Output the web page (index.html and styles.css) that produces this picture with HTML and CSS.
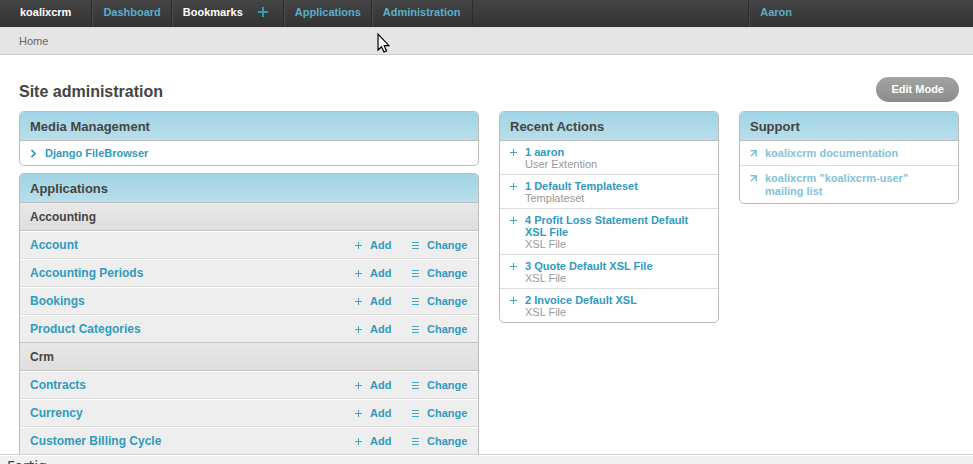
FILE: index.html
```html
<!DOCTYPE html>
<html lang="en">
<head>
<meta charset="utf-8">
<title>Site administration</title>
<link rel="stylesheet" href="styles.css">
</head>
<body>
<svg class="defs" aria-hidden="true">
  <symbol id="plus" viewBox="0 0 7 7"><path d="M3 0h1v7h-1zM0 3h7v1h-7z" fill="currentColor"/></symbol>
  <symbol id="list" viewBox="0 0 7 7"><path d="M0 0h7v1h-7zM0 3h7v1h-7zM0 6h7v1h-7z" fill="currentColor"/></symbol>
  <symbol id="chevron" viewBox="0 0 7 9"><path d="M1.5 .8L5 4.5L1.5 8.2" fill="none" stroke="currentColor" stroke-width="1.7"/></symbol>
  <symbol id="external" viewBox="0 0 7 7"><path d="M.4 .8h5.8v5.8M6 1L.8 6.2" fill="none" stroke="currentColor" stroke-width="1.6"/></symbol>
</svg>
<header class="topbar">
  <nav class="nav">
    <span class="nav-item brand">koalixcrm</span>
    <a class="nav-item" href="#">Dashboard</a>
    <span class="nav-item bookmarks">Bookmarks <button class="add-bookmark" type="button" aria-label="Add bookmark"><svg viewBox="0 0 10 10"><path d="M5 0v10M0 5h10" fill="none" stroke="currentColor" stroke-width="2"/></svg></button></span>
    <a class="nav-item" href="#">Applications</a>
    <a class="nav-item" href="#">Administration</a>
  </nav>
  <a class="nav-item user" href="#">Aaron</a>
</header>
<div class="breadcrumbs">Home</div>
<main class="content">
  <div class="title-row">
    <h1>Site administration</h1>
    <button class="edit-mode" type="button">Edit Mode</button>
  </div>
  <div class="columns">
    <div class="column">
      <section class="module">
        <h2>Media Management</h2>
        <ul class="links">
          <li><svg class="icon chevron"><use href="#chevron"/></svg><a href="#">Django FileBrowser</a></li>
        </ul>
      </section>
      <section class="module continues">
        <h2>Applications</h2>
        <h3>Accounting</h3>
        <ul class="models">
          <li><a class="model" href="#">Account</a><a class="action add" href="#"><svg class="icon"><use href="#plus"/></svg>Add</a><a class="action change" href="#"><svg class="icon"><use href="#list"/></svg>Change</a></li>
          <li><a class="model" href="#">Accounting Periods</a><a class="action add" href="#"><svg class="icon"><use href="#plus"/></svg>Add</a><a class="action change" href="#"><svg class="icon"><use href="#list"/></svg>Change</a></li>
          <li><a class="model" href="#">Bookings</a><a class="action add" href="#"><svg class="icon"><use href="#plus"/></svg>Add</a><a class="action change" href="#"><svg class="icon"><use href="#list"/></svg>Change</a></li>
          <li><a class="model" href="#">Product Categories</a><a class="action add" href="#"><svg class="icon"><use href="#plus"/></svg>Add</a><a class="action change" href="#"><svg class="icon"><use href="#list"/></svg>Change</a></li>
        </ul>
        <h3>Crm</h3>
        <ul class="models">
          <li><a class="model" href="#">Contracts</a><a class="action add" href="#"><svg class="icon"><use href="#plus"/></svg>Add</a><a class="action change" href="#"><svg class="icon"><use href="#list"/></svg>Change</a></li>
          <li><a class="model" href="#">Currency</a><a class="action add" href="#"><svg class="icon"><use href="#plus"/></svg>Add</a><a class="action change" href="#"><svg class="icon"><use href="#list"/></svg>Change</a></li>
          <li><a class="model" href="#">Customer Billing Cycle</a><a class="action add" href="#"><svg class="icon"><use href="#plus"/></svg>Add</a><a class="action change" href="#"><svg class="icon"><use href="#list"/></svg>Change</a></li>
        </ul>
      </section>
    </div>
    <div class="column">
      <section class="module">
        <h2>Recent Actions</h2>
        <ul class="recent">
          <li><svg class="icon"><use href="#plus"/></svg><div><a href="#">1 aaron</a><span>User Extention</span></div></li>
          <li><svg class="icon"><use href="#plus"/></svg><div><a href="#">1 Default Templateset</a><span>Templateset</span></div></li>
          <li><svg class="icon"><use href="#plus"/></svg><div><a href="#">4 Profit Loss Statement Default XSL File</a><span>XSL File</span></div></li>
          <li><svg class="icon"><use href="#plus"/></svg><div><a href="#">3 Quote Default XSL File</a><span>XSL File</span></div></li>
          <li><svg class="icon"><use href="#plus"/></svg><div><a href="#">2 Invoice Default XSL</a><span>XSL File</span></div></li>
        </ul>
      </section>
    </div>
    <div class="column">
      <section class="module">
        <h2>Support</h2>
        <ul class="links external">
          <li><svg class="icon"><use href="#external"/></svg><a href="#">koalixcrm documentation</a></li>
          <li><svg class="icon"><use href="#external"/></svg><a href="#">koalixcrm "koalixcrm-user" mailing list</a></li>
        </ul>
      </section>
    </div>
  </div>
</main>
<footer class="statusbar">Fertig</footer>
<svg class="cursor" viewBox="0 0 13 20" aria-hidden="true"><path d="M1 1v16l3.5-3.3L7 19l2.6-1.1-2.4-5.2H12z" fill="#fff" stroke="#000" stroke-width="1.2"/></svg>
</body>
</html>
```

FILE: styles.css
```css
* { box-sizing: border-box; }

body {
  margin: 0;
  height: 100vh;
  display: flex;
  flex-direction: column;
  overflow: hidden;
  background: #fff;
  color: #444;
  font: 11px/13px "Liberation Sans", Arial, sans-serif;
}

h1, h2, h3, ul { margin: 0; padding: 0; }
ul { list-style: none; }
a { color: #309bbf; font-weight: bold; text-decoration: none; }
.defs { display: none; }
.icon { width: 7px; height: 7px; flex: none; color: #45a5c4; }

.topbar {
  display: flex;
  flex: none;
  justify-content: space-between;
  height: 27px;
  background: linear-gradient(#444, #333);
  font-weight: bold;
}
.nav { display: flex; }
.nav-item {
  display: flex;
  align-items: flex-start;
  padding: 6px 11px 0 10px;
  border-left: 1px solid #484848;
  box-shadow: -1px 0 #2b2b2b;
  color: #59afcc;
}
.nav-item.brand { padding: 6px 21px 0 20px; border-left: 0; color: #fff; }
.nav-item.bookmarks { gap: 15px; padding-right: 16px; color: #fff; }
.nav > :last-child { padding-right: 12px; border-right: 1px solid #2b2b2b; }
.nav-item.user { flex: 0 0 23%; }
.add-bookmark {
  display: flex;
  align-items: flex-start;
  height: 13px;
  padding: 1px 0 0;
  border: 0;
  background: none;
  color: #309bbf;
}
.add-bookmark svg { width: 10px; height: 10px; }

.breadcrumbs {
  flex: none;
  padding: 7px 19px 6px;
  border-top: 1px solid #d9d9d9;
  border-bottom: 1px solid #ccc;
  background: #e5e5e5;
  color: #666;
}

.content { flex: 1; min-height: 0; overflow: hidden; padding: 22px 14px 0 19px; }
.title-row { display: flex; justify-content: space-between; align-items: flex-start; margin-bottom: 9px; }
h1 { padding-top: 5px; font-size: 16px; line-height: 20px; }
.edit-mode {
  height: 25px;
  padding: 0 15px;
  border: 0;
  border-radius: 13px;
  background: linear-gradient(#a3a3a3, #8c8c8c);
  color: #fff;
  font: bold 11px/13px "Liberation Sans", Arial, sans-serif;
}

.columns { display: grid; grid-template-columns: 460fr 220fr 220fr; gap: 20px; align-items: start; }
.column { display: grid; gap: 7px; }
.module { overflow: hidden; border: 1px solid #bdbdbd; border-radius: 5px; background: #fff; }
.module.continues { border-bottom: 0; border-radius: 5px 5px 0 0; }
h2 {
  padding: 7px 10px 5px;
  border-bottom: 1px solid #bdbdbd;
  background: linear-gradient(#a1d4e5, #b9deeb);
  font-size: 13px;
  line-height: 16px;
}
h3 {
  padding: 7px 10px 5px;
  border-bottom: 1px solid #c4c4c4;
  background: linear-gradient(#e8e8e8, #dedede);
  font-size: 12px;
  line-height: 15px;
}

.links li { display: flex; align-items: flex-start; gap: 8px; padding: 6px 10px 5px; }
.links li + li { border-top: 1px solid #ddd; }
.links .icon { margin-top: 3px; }
.links .chevron { height: 9px; margin-top: 2px; color: #309bbf; }
.external a, .links.external .icon { color: #83c3d9; }

.models li {
  display: flex;
  align-items: center;
  height: 28px;
  padding: 0 10px;
  border-top: 1px solid #fff;
  border-bottom: 1px solid #ddd;
  background: #eee;
}
.models li:last-child { border-bottom-color: #c4c4c4; }
.model { flex: 1; font-size: 12px; }
.action { display: flex; align-items: center; gap: 8px; }
.add { width: 57px; }
.change { width: 56px; }

.recent li { display: flex; gap: 8px; padding: 5px 10px 4px; line-height: 12px; }
.recent li + li { border-top: 1px solid #ddd; }
.recent .icon { margin-top: 3px; }
.recent a, .recent span { display: block; }
.recent span { color: #999; }

.statusbar {
  flex: none;
  height: 10px;
  padding: 3px 7px 0;
  overflow: hidden;
  border-top: 1px solid #d4d2cf;
  box-shadow: inset 0 1px #fff;
  background: #f2f1f0;
  color: #444;
  font: 14px/16px "DejaVu Sans", sans-serif;
}

.cursor { position: absolute; left: 377px; top: 33px; width: 13px; height: 20px; }
```
